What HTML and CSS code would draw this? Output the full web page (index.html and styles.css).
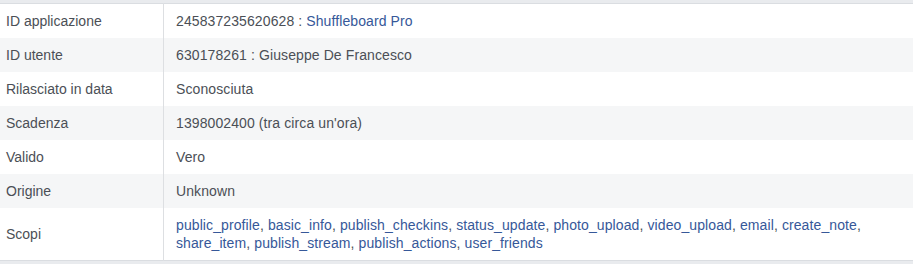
FILE: index.html
```html
<!DOCTYPE html>
<html lang="it">
<head>
<meta charset="utf-8">
<title>Token</title>
<link rel="stylesheet" href="styles.css">
</head>
<body>
<div class="page">
<table class="info">
<tbody>
<tr><th>ID applicazione</th><td>245837235620628 : <a href="#">Shuffleboard Pro</a></td></tr>
<tr><th>ID utente</th><td>630178261 : Giuseppe De Francesco</td></tr>
<tr><th>Rilasciato in data</th><td>Sconosciuta</td></tr>
<tr><th>Scadenza</th><td>1398002400 (tra circa un'ora)</td></tr>
<tr><th>Valido</th><td>Vero</td></tr>
<tr><th>Origine</th><td>Unknown</td></tr>
<tr><th>Scopi</th><td><a href="#">public_profile</a>, <a href="#">basic_info</a>, <a href="#">publish_checkins</a>, <a href="#">status_update</a>, <a href="#">photo_upload</a>, <a href="#">video_upload</a>, <a href="#">email</a>, <a href="#">create_note</a>, <a href="#">share_item</a>, <a href="#">publish_stream</a>, <a href="#">publish_actions</a>, <a href="#">user_friends</a></td></tr>
</tbody>
</table>
</div>
</body>
</html>
```
FILE: styles.css
```css
html, body {
  margin: 0;
  padding: 0;
  background: #e9ebee;
}
body {
  font-family: "Liberation Sans", Arial, Helvetica, sans-serif;
  font-size: 14px;
  line-height: 18px;
  color: #4b4f56;
}
.page {
  padding-top: 3px;
}
.info {
  width: 100%;
  border-collapse: collapse;
  background: #fff;
  border-top: 1px solid #dadde1;
  border-bottom: 1px solid #dadde1;
}
.info th,
.info td {
  padding: 8px 0;
  text-align: left;
  vertical-align: middle;
  font-weight: normal;
}
.info th {
  width: 157px;
  padding-left: 6px;
  border-right: 1px solid #dddfe2;
}
.info td {
  padding-left: 12px;
  padding-right: 40px;
  letter-spacing: 0.1px;
}
.info tr:nth-child(even) {
  background: #f5f6f7;
}
.info a {
  color: #365899;
  text-decoration: none;
}
```
